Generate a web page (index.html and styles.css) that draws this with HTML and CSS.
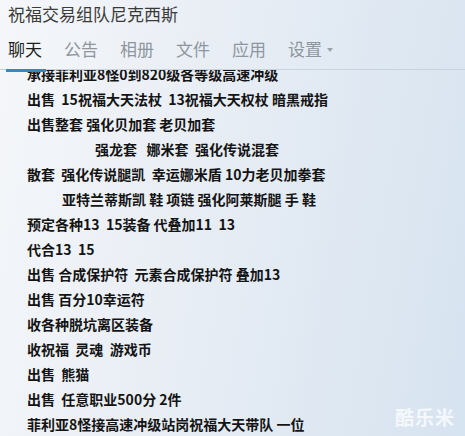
FILE: index.html
```html
<!DOCTYPE html>
<html lang="zh">
<head>
<meta charset="utf-8">
<link rel="stylesheet" href="styles.css">
</head>
<body>
<div class="window">
  <div class="title">祝福交易组队尼克西斯</div>
  <div class="tabs">
    <span class="tab active">聊天</span>
    <span class="tab">公告</span>
    <span class="tab">相册</span>
    <span class="tab">文件</span>
    <span class="tab">应用</span>
    <span class="tab">设置<span class="caret"></span></span>
  </div>
  <div class="content">
    <div class="lines">
      <div class="line">承接菲利亚8怪0到820级各等级高速冲级</div>
      <div class="line">出售  15祝福大天法杖  13祝福大天权杖 暗黑戒指</div>
      <div class="line">出售整套 强化贝加套 老贝加套</div>
      <div class="line indent2">强龙套   娜米套  强化传说混套</div>
      <div class="line">散套  强化传说腿凯  幸运娜米盾 10力老贝加拳套</div>
      <div class="line indent1">亚特兰蒂斯凯 鞋 项链 强化阿莱斯腿 手 鞋</div>
      <div class="line">预定各种13  15装备 代叠加11  13</div>
      <div class="line">代合13  15</div>
      <div class="line">出售 合成保护符  元素合成保护符 叠加13</div>
      <div class="line">出售 百分10幸运符</div>
      <div class="line">收各种脱坑离区装备</div>
      <div class="line">收祝福  灵魂  游戏币</div>
      <div class="line">出售  熊猫</div>
      <div class="line">出售  任意职业500分 2件</div>
      <div class="line">菲利亚8怪接高速冲级站岗祝福大天带队 一位</div>
    </div>
  </div>
  <div class="watermark">酷乐米</div>
</div>
</body>
</html>
```
FILE: styles.css
```css
html, body {
  margin: 0;
  padding: 0;
}
body {
  width: 465px;
  height: 436px;
  overflow: hidden;
  font-family: "Noto Sans CJK SC", "Noto Sans", sans-serif;
}
.window {
  position: relative;
  width: 465px;
  height: 436px;
  background: linear-gradient(100deg, #f5f7fa 0%, #e9eef5 40%, #d6e3f0 100%);
}
.title {
  padding: 4px 0 0 8px;
  font-size: 17px;
  line-height: 20px;
  color: #3a3a3a;
}
.tabs {
  display: flex;
  gap: 22px;
  margin-top: 14px;
  padding: 0 0 0 8px;
  height: 31px;
  border-bottom: 1px solid #c7d3df;
  font-size: 17px;
  line-height: 22px;
  color: #8e969e;
}
.tab {
  position: relative;
  display: flex;
  align-items: flex-start;
}
.tab.active {
  color: #1e1e1e;
}
.tab.active::after {
  content: "";
  position: absolute;
  left: -2px;
  right: -4px;
  bottom: -3px;
  height: 3px;
  background: #2a8ccd;
}
.caret {
  display: inline-block;
  margin: 10px 0 0 5px;
  width: 0;
  height: 0;
  border-left: 3px solid transparent;
  border-right: 3px solid transparent;
  border-top: 4px solid #9aa2aa;
}
.content {
  height: 366px;
  overflow: hidden;
}
.lines {
  margin-top: -8px;
  padding-left: 27px;
  font-size: 14px;
  line-height: 25px;
  font-weight: bold;
  color: #141414;
}
.line {
  white-space: pre;
}
.indent1 {
  padding-left: 35px;
}
.indent2 {
  padding-left: 68px;
}
.watermark {
  position: absolute;
  right: 10px;
  bottom: 6px;
  font-size: 19px;
  font-weight: bold;
  letter-spacing: 1px;
  color: rgba(255, 255, 255, 0.75);
}
```
